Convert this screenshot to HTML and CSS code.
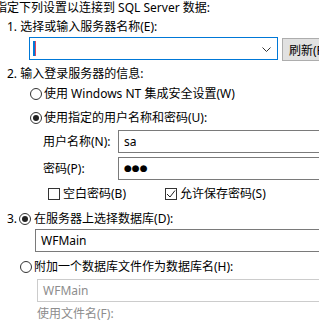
FILE: index.html
```html
<!DOCTYPE html>
<html lang="zh-CN">
<head>
    <meta charset="UTF-8">
    <title>连接属性</title>
    <link rel="stylesheet" href="styles.css">
</head>
<body>
    <div class="panel">
        <div class="intro">指定下列设置以连接到 SQL Server 数据:</div>

        <div class="step step-1">1. 选择或输入服务器名称(E):</div>
        <div class="server-row">
            <div class="combo">
                <span class="caret"></span>
                <svg class="chevron" width="9" height="5" viewBox="0 0 9 5">
                    <polyline points="0.5,0.5 4.5,4.5 8.5,0.5" fill="none" stroke="#333" stroke-width="1"/>
                </svg>
            </div>
            <button class="refresh">刷新(R)</button>
        </div>

        <div class="step step-2">2. 输入登录服务器的信息:</div>
        <label class="option opt-nt"><span class="radio"></span>使用 Windows NT 集成安全设置(W)</label>
        <label class="option opt-user"><span class="radio checked"></span>使用指定的用户名称和密码(U):</label>

        <div class="field-row row-user">
            <span class="field-label">用户名称(N):</span>
            <div class="textbox">sa</div>
        </div>
        <div class="field-row row-pass">
            <span class="field-label">密码(P):</span>
            <div class="textbox dots">●●●</div>
        </div>

        <div class="checks">
            <label class="check check-blank"><span class="box"></span>空白密码(B)</label>
            <label class="check check-save"><span class="box ticked">
                <svg width="10" height="10" viewBox="0 0 10 10"><polyline points="1,5 4,8 9,1.5" fill="none" stroke="#222" stroke-width="1"/></svg>
            </span>允许保存密码(S)</label>
        </div>

        <div class="step step-3">3. <span class="radio checked"></span>在服务器上选择数据库(D):</div>
        <div class="textbox db-box">WFMain</div>

        <label class="option opt-attach"><span class="radio"></span>附加一个数据库文件作为数据库名(H):</label>
        <div class="textbox db-box disabled">WFMain</div>
        <div class="file-label">使用文件名(F):</div>
    </div>
</body>
</html>
```

FILE: styles.css
```css
* {
    margin: 0;
    padding: 0;
    box-sizing: border-box;
}

body {
    font-family: "Noto Sans", "Noto Sans CJK SC", sans-serif;
    font-size: 12px;
    line-height: 16px;
    color: #000;
    background-color: #fff;
    overflow: hidden;
}

.panel {
    display: flex;
    flex-direction: column;
    width: 360px;
}

.intro {
    height: 16px;
    margin-left: -5px;
    white-space: nowrap;
}

.step {
    height: 16px;
    padding-left: 7px;
    white-space: nowrap;
    display: flex;
    align-items: center;
}

.step-1 {
    margin-top: 3px;
}

.server-row {
    display: flex;
    align-items: flex-start;
    margin-top: 2px;
    padding-left: 29px;
}

.combo {
    position: relative;
    width: 249px;
    height: 23px;
    border: 1px solid #0078d7;
    background-color: #fff;
}

.caret {
    position: absolute;
    left: 3px;
    top: 3px;
    width: 3px;
    height: 15px;
    background-color: #0078d7;
    border-right: 1px solid #e0455f;
}

.chevron {
    position: absolute;
    right: 6px;
    top: 9px;
}

.refresh {
    margin-left: 4px;
    margin-top: 1px;
    height: 23px;
    width: 52px;
    border: 1px solid #adadad;
    background-color: #e1e1e1;
    font-family: inherit;
    font-size: 12px;
    text-align: left;
    padding-left: 6px;
    white-space: nowrap;
}

.step-2 {
    margin-top: 5px;
}

.option {
    display: flex;
    align-items: center;
    height: 16px;
    white-space: nowrap;
}

.opt-nt {
    margin-top: 4px;
    padding-left: 30px;
}

.opt-user {
    margin-top: 8px;
    padding-left: 30px;
}

.radio {
    display: inline-block;
    position: relative;
    width: 12px;
    height: 12px;
    border: 1px solid #333;
    border-radius: 50%;
    margin-right: 2px;
    flex-shrink: 0;
}

.radio.checked::after {
    content: "";
    position: absolute;
    left: 2px;
    top: 2px;
    width: 6px;
    height: 6px;
    border-radius: 50%;
    background-color: #222;
}

.field-row {
    display: flex;
    align-items: center;
    padding-left: 43px;
}

.row-user {
    margin-top: 4px;
}

.row-pass {
    margin-top: 4px;
}

.field-label {
    width: 75px;
    white-space: nowrap;
}

.textbox {
    height: 23px;
    width: 240px;
    border: 1px solid #7a7a7a;
    background-color: #fff;
    padding-left: 5px;
    line-height: 21px;
    white-space: nowrap;
}

.dots {
    font-size: 9px;
    letter-spacing: 0;
    font-family: "DejaVu Sans", sans-serif;
}

.checks {
    display: flex;
    margin-top: 6px;
    height: 16px;
}

.check {
    display: flex;
    align-items: center;
    white-space: nowrap;
}

.check-blank {
    padding-left: 48px;
}

.check-save {
    margin-left: 39px;
}

.box {
    display: inline-flex;
    align-items: center;
    justify-content: center;
    width: 12px;
    height: 12px;
    border: 1px solid #333;
    margin-right: 3px;
}

.step-3 {
    margin-top: 9px;
}

.step-3 .radio {
    margin-left: 2px;
    margin-right: 3px;
}

.db-box {
    margin-top: 2px;
    margin-left: 35px;
    width: 300px;
}

.opt-attach {
    margin-top: 7px;
    padding-left: 20px;
}

.db-box.disabled {
    margin-top: 4px;
    margin-left: 37px;
    border-color: #cccccc;
    color: #8d8d8d;
}

.file-label {
    margin-top: 4px;
    padding-left: 37px;
    height: 16px;
    color: #8d8d8d;
    white-space: nowrap;
}
```
